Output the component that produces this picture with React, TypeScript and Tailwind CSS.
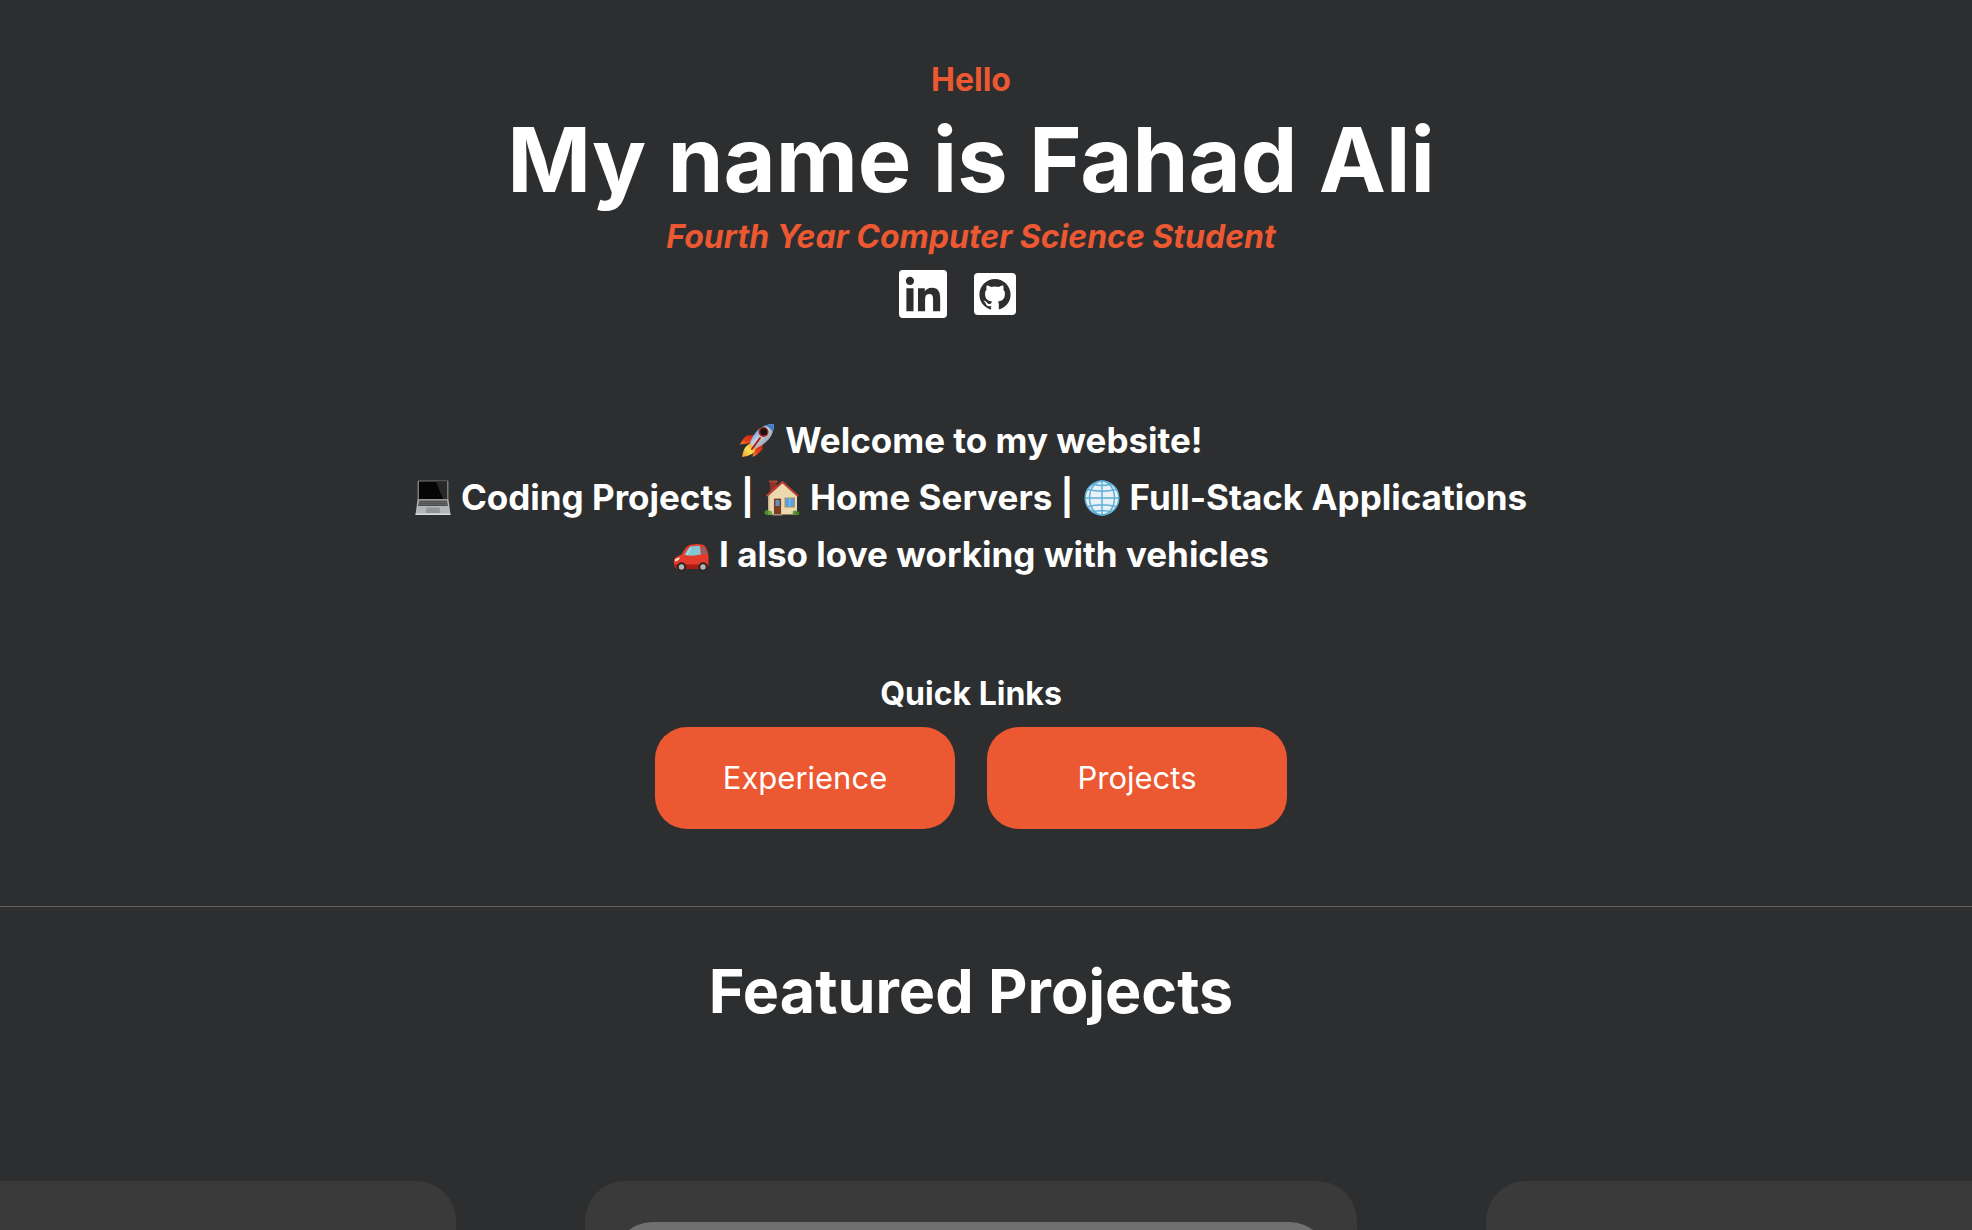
import type { ReactNode } from "react";
import { FaLinkedin } from "react-icons/fa";

function GithubBadge() {
  return (
    <svg viewBox="0 0 42 42" className="size-[42px]" aria-hidden="true">
      <rect width="42" height="42" rx="4" fill="#fff" />
      <path
        transform="translate(5.4 5.6) scale(1.3)"
        fill="#2d2e2f"
        d="M12 .297c-6.63 0-12 5.373-12 12 0 5.303 3.438 9.8 8.205 11.385.6.113.82-.258.82-.577 0-.285-.01-1.04-.015-2.04-3.338.724-4.042-1.61-4.042-1.61C4.422 18.07 3.633 17.7 3.633 17.7c-1.087-.744.084-.729.084-.729 1.205.084 1.838 1.236 1.838 1.236 1.07 1.835 2.809 1.305 3.495.998.108-.776.417-1.305.76-1.605-2.665-.3-5.466-1.332-5.466-5.93 0-1.31.465-2.38 1.235-3.22-.135-.303-.54-1.523.105-3.176 0 0 1.005-.322 3.3 1.23.96-.267 1.98-.399 3-.405 1.02.006 2.04.138 3 .405 2.28-1.552 3.285-1.23 3.285-1.23.645 1.653.24 2.873.12 3.176.765.84 1.23 1.91 1.23 3.22 0 4.61-2.805 5.625-5.475 5.92.42.36.81 1.096.81 2.22 0 1.606-.015 2.896-.015 3.286 0 .315.21.69.825.57C20.565 22.092 24 17.592 24 12.297c0-6.627-5.373-12-12-12"
      />
    </svg>
  );
}

function Emoji({ label, children }: { label: string; children: ReactNode }) {
  return (
    <svg viewBox="0 0 36 36" role="img" aria-label={label} className="size-9 shrink-0">
      {children}
    </svg>
  );
}

function Rocket() {
  return (
    <Emoji label="rocket">
      <defs>
        <linearGradient id="rk-body" x1="0" y1="0" x2="1" y2="1">
          <stop offset="0.2" stopColor="#4a8fd8" />
          <stop offset="0.45" stopColor="#c3d3df" />
          <stop offset="0.75" stopColor="#9aa3ab" />
        </linearGradient>
        <linearGradient id="rk-fin" x1="1" y1="0" x2="0" y2="1">
          <stop offset="0" stopColor="#c71f12" />
          <stop offset="0.6" stopColor="#e5401b" />
          <stop offset="1" stopColor="#f58a2c" />
        </linearGradient>
        <linearGradient id="rk-flame" x1="1" y1="0" x2="0" y2="1">
          <stop offset="0" stopColor="#ef8a1d" />
          <stop offset="0.5" stopColor="#fbe15a" />
          <stop offset="1" stopColor="#f39a25" />
        </linearGradient>
      </defs>
      <path d="M16 12 8 12.500Q4 15 1 21.500L12 20z" fill="url(#rk-fin)" />
      <path d="M24 19 23.500 26Q20 31 13.500 34L15 24z" fill="url(#rk-fin)" />
      <path d="M12 20Q5 22 3 34Q15 33 17 25z" fill="url(#rk-flame)" />
      <path d="M35 1Q24 1 17 9Q12 15 11 20.500L16.500 25.500Q24 23 30 16Q35 10 35 1z" fill="url(#rk-body)" />
      <path d="M35 1Q30 1 26 2.500Q32 5 33.500 9Q35 5 35 1z" fill="#3d7fc4" />
      <circle cx="24.500" cy="9" r="5" fill="#a8241c" />
      <circle cx="24.700" cy="8.800" r="3.500" fill="#191414" />
      <path d="M21 15 13 26" stroke="#b71912" strokeWidth="2" strokeLinecap="round" />
    </Emoji>
  );
}

function Laptop() {
  return (
    <Emoji label="laptop">
      <path d="M3.500 0.500h29a1 1 0 0 1 1 1V20h-31V1.500a1 1 0 0 1 1-1z" fill="#77797a" />
      <path d="M4 1.500h28V19H4z" fill="#050505" />
      <path d="M21 1.500h11V19h-4z" fill="#26282a" />
      <path d="M2.500 19.500h31L35.500 34.500H0.500z" fill="#b4b5b6" />
      <path d="M4 20.500h28l1 5.500H3z" fill="#4b4c4d" />
      <path d="M4 22.200h28.500M3.500 24.200h29.500" stroke="#8d8e8f" strokeWidth="0.700" strokeDasharray="1.300 0.700" />
      <path d="M11.500 27.500h13l.700 5.500H10.800z" fill="#929394" />
      <path d="M0.500 33.500h35v1.600h-35z" fill="#dadbdb" />
    </Emoji>
  );
}

function House() {
  return (
    <Emoji label="house">
      <path d="M6 1h6.500v12H6z" fill="#8f3328" />
      <path d="M5 .5h8.500v2H5z" fill="#a8483b" />
      <path d="M4 16 18.500 3 33 16V34.500H4z" fill="#ecd9ae" />
      <path d="M4 16v18.500h1.500V15z" fill="#c9b48a" />
      <path d="M2.500 16 18.500 2 34 16" fill="none" stroke="#c23d33" strokeWidth="2" strokeLinejoin="round" />
      <path d="M9 17.500h9v17H9z" fill="#f5ead2" />
      <path d="M9.800 18.500h7.400v16H9.800z" fill="#7c3d22" />
      <path d="M11.500 20h4v6h-4z" fill="#5f93c4" />
      <path d="M20.500 17.500h10.500v10h-10.500z" fill="#a89263" />
      <path d="M21.500 18.500h8.500v8h-8.500z" fill="#5c9fe0" />
      <path d="M25.700 18.500v8" stroke="#8bbdec" />
      <path d="M8.500 34h10v1.500h-10z" fill="#a39576" />
      <circle cx="3" cy="32.500" r="2.500" fill="#4f8a2c" />
      <circle cx="6" cy="33" r="2.200" fill="#6ba53b" />
      <circle cx="31" cy="32.800" r="2.400" fill="#5d972f" />
      <circle cx="33.500" cy="33.200" r="2" fill="#477f28" />
    </Emoji>
  );
}

function Globe() {
  return (
    <Emoji label="globe">
      <circle cx="18" cy="18" r="17" fill="#e9f1f6" />
      <g fill="none" stroke="#5eb0d8" strokeWidth="1.500">
        <circle cx="18" cy="18" r="16.800" />
        <ellipse cx="18" cy="18" rx="12.500" ry="17" />
        <path d="M18 1v34M1 18h34M4 9.500q14 3.500 28 0M4 26.500q14-3.500 28 0M9 4q9 3 18 0M9 32q9-3 18 0" />
      </g>
    </Emoji>
  );
}

function Car() {
  return (
    <Emoji label="car">
      <path
        d="M1 27Q0 22 3 20L8.500 17.500Q12 10 16.500 8Q24 6 31 8Q34 11 35.500 18V27Q35.500 31.500 32 32H4Q1.500 31 1 27z"
        fill="#e33a2b"
      />
      <path d="M11.500 18Q14 11.500 18 9.500Q23 8.300 27 9L28 17.500Q20 19.500 11.500 18z" fill="#84c5d4" />
      <path d="M29 9.200Q32 11 33 16.500L30 17.200z" fill="#4f7f8c" />
      <path d="M18 9.500 14 18" stroke="#c9e6ec" strokeWidth="1" />
      <path d="M2 22.500q2-2 5-2-1 3.500-5 4z" fill="#ffe3c0" />
      <path d="M1 27.500h34v2.500q-1 2-3 2H4q-2.500-1-3-4.500z" fill="#a91a14" />
      <circle cx="8.500" cy="30" r="4.700" fill="#2a2424" />
      <circle cx="8.500" cy="30" r="2.700" fill="#b5b5b5" />
      <circle cx="30" cy="30" r="4.700" fill="#2a2424" />
      <circle cx="30" cy="30" r="2.700" fill="#b5b5b5" />
    </Emoji>
  );
}

function TextLine({ children }: { children: ReactNode }) {
  return <p className="flex items-center justify-center gap-2.5">{children}</p>;
}

function QuickLink({ href, children }: { href: string; children: ReactNode }) {
  return (
    <a
      href={href}
      className="flex h-[102px] w-[300px] items-center justify-center rounded-4xl bg-[#ec5831] text-[31px]"
    >
      {children}
    </a>
  );
}

function ProjectCard({ children }: { children?: ReactNode }) {
  return (
    <article className="h-[560px] w-[772px] shrink-0 rounded-[40px] bg-[#3a3a3a] px-7 pt-[41px]">
      {children}
    </article>
  );
}

export default function App() {
  return (
    <div className="h-screen overflow-hidden bg-[#2d2e2f] font-['Inter',sans-serif] text-white">
      <header className="flex flex-col items-center pt-[60px] pr-[30px]">
        <p className="text-[32px] leading-10 font-bold text-[#ec5831]">Hello</p>
        <h1 className="text-[90px] leading-[120px] font-bold">My name is Fahad Ali</h1>
        <p className="text-[32px] leading-[34px] font-bold text-[#ec5831] italic">
          Fourth Year Computer Science Student
        </p>
        <nav aria-label="Social" className="mt-4 flex items-center gap-[27px] pr-[27px]">
          <a href="#linkedin" aria-label="LinkedIn">
            <FaLinkedin viewBox="0 32 448 448" className="size-12" />
          </a>
          <a href="#github" aria-label="GitHub">
            <GithubBadge />
          </a>
        </nav>
        <div className="mt-[94px] text-[35px] leading-[57px] font-bold">
          <TextLine>
            <Rocket />
            <span>Welcome to my website!</span>
          </TextLine>
          <TextLine>
            <Laptop />
            <span>Coding Projects |</span>
            <House />
            <span>Home Servers |</span>
            <Globe />
            <span>Full-Stack Applications</span>
          </TextLine>
          <TextLine>
            <Car />
            <span>I also love working with vehicles</span>
          </TextLine>
        </div>
        <h2 className="mt-[91px] text-[32px] leading-10 font-bold">Quick Links</h2>
        <nav aria-label="Quick Links" className="mt-[13px] flex gap-8">
          <QuickLink href="#experience">Experience</QuickLink>
          <QuickLink href="#projects">Projects</QuickLink>
        </nav>
      </header>
      <hr className="mt-[77px] border-[#665f5c]" />
      <section id="projects" className="pr-[30px]">
        <h2 className="pt-11 text-center text-[61px] leading-20 font-bold">Featured Projects</h2>
        <div className="mt-[150px] flex justify-center gap-[129px]">
          <ProjectCard />
          <ProjectCard>
            <div className="h-[380px] rounded-[40px] bg-[#707070]" />
          </ProjectCard>
          <ProjectCard />
        </div>
      </section>
    </div>
  );
}
